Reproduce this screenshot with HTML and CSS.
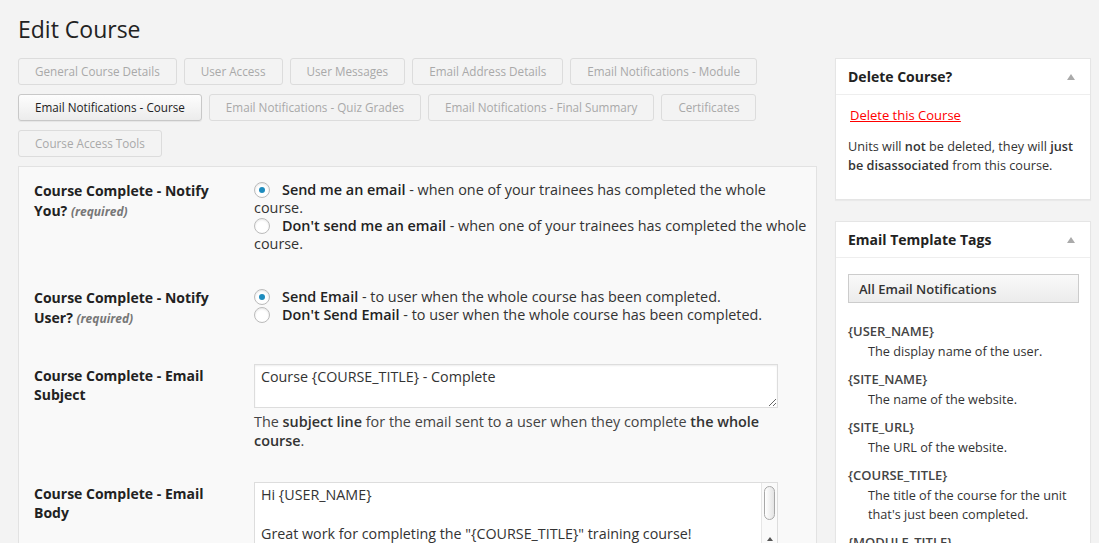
FILE: index.html
```html
<!DOCTYPE html>
<html lang="en">
<head>
    <meta charset="UTF-8">
    <meta name="viewport" content="width=device-width, initial-scale=1.0">
    <title>Edit Course</title>
    <link rel="stylesheet" href="styles.css">
</head>
<body>
    <h1 class="page-title">Edit Course</h1>
    <div class="layout">
        <div class="main">
            <div class="tabs">
                <a class="tab">General Course Details</a>
                <a class="tab">User Access</a>
                <a class="tab">User Messages</a>
                <a class="tab">Email Address Details</a>
                <a class="tab">Email Notifications - Module</a>
                <a class="tab tab-active">Email Notifications - Course</a>
                <a class="tab">Email Notifications - Quiz Grades</a>
                <a class="tab">Email Notifications - Final Summary</a>
                <a class="tab">Certificates</a>
                <a class="tab">Course Access Tools</a>
            </div>

            <div class="panel">
                <div class="row row-notify-you">
                    <div class="row-label">Course Complete - Notify You? <em class="req">(required)</em></div>
                    <div class="row-field">
                        <label class="option"><input type="radio" name="notify_you" checked><strong>Send me an email</strong> - when one of your trainees has completed the whole course.</label>
                        <label class="option"><input type="radio" name="notify_you"><strong>Don't send me an email</strong> - when one of your trainees has completed the whole course.</label>
                    </div>
                </div>
                <div class="row row-notify-user">
                    <div class="row-label">Course Complete - Notify User? <em class="req">(required)</em></div>
                    <div class="row-field">
                        <label class="option"><input type="radio" name="notify_user" checked><strong>Send Email</strong> - to user when the whole course has been completed.</label>
                        <label class="option"><input type="radio" name="notify_user"><strong>Don't Send Email</strong> - to user when the whole course has been completed.</label>
                    </div>
                </div>
                <div class="row row-subject">
                    <div class="row-label row-label-text">Course Complete - Email Subject</div>
                    <div class="row-field">
                        <textarea class="subject">Course {COURSE_TITLE} - Complete</textarea>
                        <p class="desc">The <strong>subject line</strong> for the email sent to a user when they complete <strong>the whole course</strong>.</p>
                    </div>
                </div>
                <div class="row row-body">
                    <div class="row-label row-label-text">Course Complete - Email Body</div>
                    <div class="row-field">
                        <div class="editor">
                            <textarea class="body-text">Hi {USER_NAME}

Great work for completing the "{COURSE_TITLE}" training course!

We hope you enjoyed the course, and learned a great deal.</textarea>
                            <div class="scrollbar">
                                <div class="thumb"></div>
                                <div class="arrow"></div>
                            </div>
                        </div>
                    </div>
                </div>
            </div>
        </div>

        <div class="side">
            <div class="box">
                <div class="box-head">
                    <h3>Delete Course?</h3>
                    <span class="toggle"></span>
                </div>
                <div class="box-body box-delete">
                    <a class="delete-link" href="#">Delete this Course</a>
                    <p>Units will <strong>not</strong> be deleted, they will <strong>just be disassociated</strong> from this course.</p>
                </div>
            </div>

            <div class="box">
                <div class="box-head">
                    <h3>Email Template Tags</h3>
                    <span class="toggle"></span>
                </div>
                <div class="box-body box-tags">
                    <button class="tag-filter">All Email Notifications</button>
                    <dl class="tags">
                        <dt>{USER_NAME}</dt>
                        <dd>The display name of the user.</dd>
                        <dt>{SITE_NAME}</dt>
                        <dd>The name of the website.</dd>
                        <dt>{SITE_URL}</dt>
                        <dd>The URL of the website.</dd>
                        <dt>{COURSE_TITLE}</dt>
                        <dd>The title of the course for the unit that's just been completed.</dd>
                        <dt>{MODULE_TITLE}</dt>
                    </dl>
                </div>
            </div>
        </div>
    </div>
</body>
</html>
```

FILE: styles.css
```css
body {
    font-family: "Open Sans", "Liberation Sans", sans-serif;
    margin: 0;
    padding: 15px 8px 0 18px;
    background-color: #f3f3f3;
    color: #444;
    font-size: 13px;
    overflow: hidden;
}
.page-title {
    margin: 0;
    font-size: 23px;
    line-height: 29px;
    font-weight: 400;
    color: #222;
}
.layout {
    display: flex;
    align-items: flex-start;
    gap: 18px;
    margin-top: 14px;
}
.main {
    width: 799px;
}
.side {
    width: 256px;
}

/* tabs */
.tabs {
    display: flex;
    flex-wrap: wrap;
    column-gap: 7px;
    row-gap: 9px;
}
.tab {
    display: block;
    height: 25px;
    line-height: 25px;
    padding: 0 16px;
    border: 1px solid #dcdcdc;
    border-radius: 3px;
    font-size: 11.7px;
    color: #a9a9a9;
    background-color: #f3f3f3;
    white-space: nowrap;
}
.tab-active {
    color: #222;
    border-color: #c8c8c8;
    background: linear-gradient(#fdfdfd, #ececec);
    box-shadow: 0 1px 1px rgba(0, 0, 0, 0.06);
}

/* settings panel */
.panel {
    margin-top: 9px;
    background-color: #f9f9f9;
    border: 1px solid #e2e2e2;
    padding: 0 6px 0 15px;
    height: 400px;
}
.row {
    display: grid;
    grid-template-columns: 220px 1fr;
}
.row-notify-you {
    padding: 14px 0 17px;
}
.row-notify-user {
    padding: 18px 0 15px;
}
.row-subject {
    padding: 20px 0 16px;
}
.row-body {
    padding: 16px 0 0;
}
.row-label {
    font-weight: bold;
    font-size: 14px;
    line-height: 20px;
    color: #222;
    padding-right: 20px;
}
.row-label-text {
    line-height: 19px;
    padding-top: 2px;
}
.req {
    font-size: 12px;
    color: #777;
    font-weight: bold;
}
.option {
    display: block;
    font-size: 14.4px;
    line-height: 18px;
    color: #333;
}
.option strong {
    font-weight: 600;
    color: #222;
}
.option input {
    -webkit-appearance: none;
    appearance: none;
    position: relative;
    width: 16px;
    height: 16px;
    margin: 0 12px 0 0;
    border: 1px solid #bbb;
    border-radius: 50%;
    background-color: #fff;
    box-shadow: inset 0 1px 2px rgba(0, 0, 0, 0.1);
    vertical-align: -3px;
    box-sizing: border-box;
}
.option input:checked::before {
    content: "";
    position: absolute;
    left: 4px;
    top: 4px;
    width: 6px;
    height: 6px;
    border-radius: 50%;
    background-color: #1e8cbe;
}
textarea {
    display: block;
    width: 524px;
    box-sizing: border-box;
    border: 1px solid #ddd;
    background-color: #fff;
    padding: 2px 6px;
    font-family: "Open Sans", "Liberation Sans", sans-serif;
    font-size: 14.3px;
    line-height: 19.5px;
    color: #333;
    box-shadow: inset 0 1px 2px rgba(0, 0, 0, 0.07);
    margin: 0;
}
.subject {
    height: 44px;
}
.editor {
    display: flex;
    width: 524px;
    height: 120px;
    box-sizing: border-box;
    border: 1px solid #ddd;
    background-color: #fff;
}
.editor .body-text {
    flex: 1;
    width: auto;
    height: 100%;
    border: none;
    box-shadow: none;
    overflow: hidden;
    resize: none;
}
.scrollbar {
    width: 15px;
    display: flex;
    flex-direction: column;
    align-items: center;
    background-color: #fafafa;
    border-left: 1px solid #e6e6e6;
}
.thumb {
    width: 11px;
    height: 34px;
    margin-top: 3px;
    box-sizing: border-box;
    background: linear-gradient(to right, #fff, #e4e4e4);
    border: 1px solid #a8a8a8;
    border-radius: 6px;
}
.arrow {
    margin-top: 17px;
    width: 0;
    height: 0;
    border-left: 3px solid transparent;
    border-right: 3px solid transparent;
    border-bottom: 4px solid #555;
}
.desc {
    margin: 4px 0 0;
    font-size: 14.4px;
    line-height: 19px;
    color: #444;
}
.desc strong {
    font-weight: 600;
    color: #333;
}

/* sidebar boxes */
.box {
    background-color: #fff;
    border: 1px solid #e5e5e5;
    box-shadow: 0 1px 1px rgba(0, 0, 0, 0.04);
    margin-bottom: 21px;
}
.box-head {
    display: flex;
    justify-content: space-between;
    align-items: center;
    padding: 8px 15px 8px 12px;
    border-bottom: 1px solid #eee;
}
.box-head h3 {
    margin: 0;
    font-size: 14px;
    line-height: 19px;
    color: #222;
}
.toggle {
    width: 0;
    height: 0;
    border-left: 4px solid transparent;
    border-right: 4px solid transparent;
    border-bottom: 6px solid #aaa;
}
.box-body {
    padding: 0 12px;
    font-size: 12.7px;
}
.box-delete {
    padding-top: 11px;
    padding-bottom: 24px;
}
.delete-link {
    display: inline-block;
    margin-left: 2px;
    color: #f00;
    font-size: 13px;
    line-height: 19px;
}
.box-delete p {
    margin: 12px 0 0;
    line-height: 19px;
    color: #333;
}
.box-delete strong {
    font-weight: 600;
}
.box-tags {
    padding-top: 16px;
}
.tag-filter {
    display: block;
    width: 231px;
    height: 29px;
    text-align: left;
    padding: 0 10px;
    border: 1px solid #ccc;
    background: linear-gradient(#f9f9f9, #ececec);
    font-family: "Open Sans", "Liberation Sans", sans-serif;
    font-weight: 600;
    font-size: 13px;
    color: #333;
}
.tags {
    margin: 19px 0 0;
    line-height: 19px;
}
.tags dt {
    font-weight: 600;
    font-size: 13px;
    color: #444;
}
.tags dd {
    margin: 1px 0 9px 20px;
    color: #333;
}
```
